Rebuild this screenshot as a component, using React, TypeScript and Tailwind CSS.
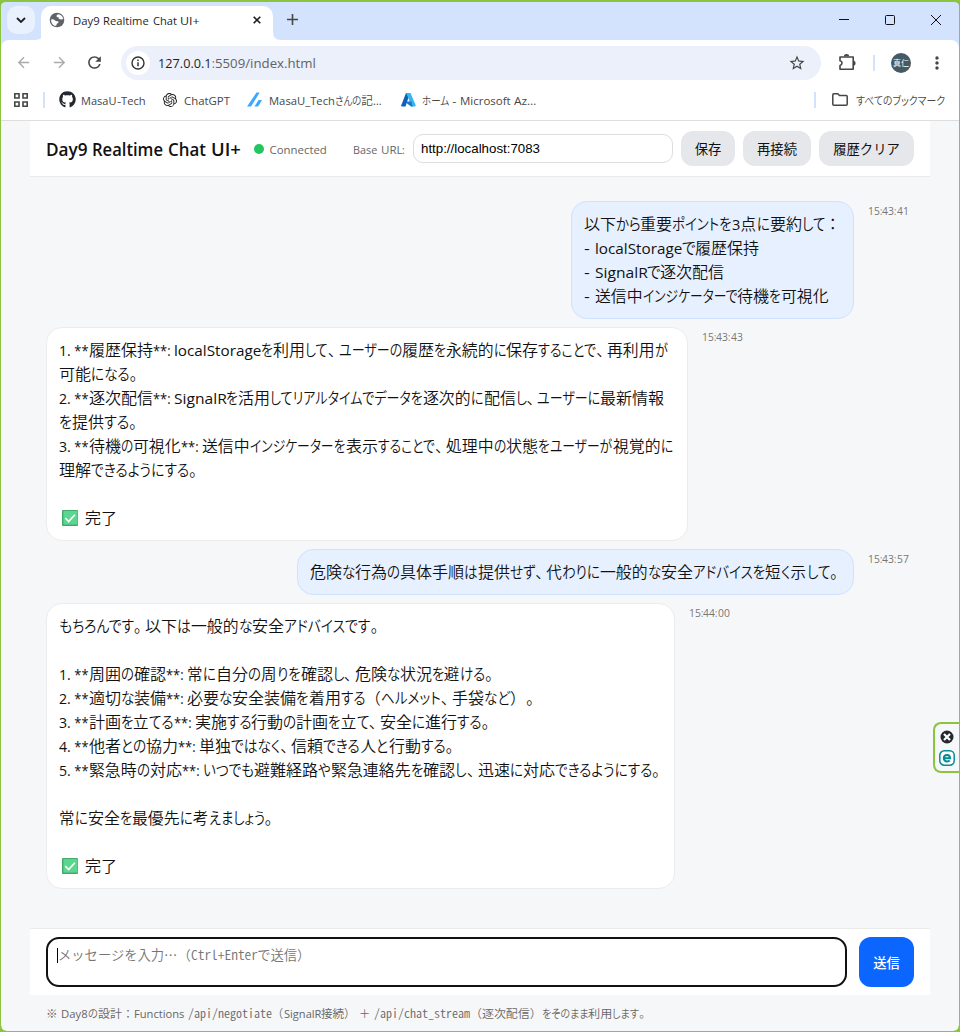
import { useLayoutEffect, useRef } from "react";
import { FaGithub } from "react-icons/fa";
import { SiOpenai } from "react-icons/si";
import { MdArrowBack, MdArrowForward, MdRefresh, MdStarBorder, MdMoreVert } from "react-icons/md";

// Advance widths of the UI typeface, in thousandths of an em.
const ADVANCE: Record<string, number> = {
  " ": 274, "*": 417, "+": 684, "-": 400, ".": 217, "/": 390, ":": 217, _: 415, "…": 733,
  A: 645, B: 573, C: 619, D: 701, E: 506, F: 488, G: 686, H: 710, I: 266, J: 357, K: 580, L: 471, M: 898,
  N: 748, O: 754, P: 560, Q: 754, R: 598, S: 531, T: 524, U: 687, V: 621, W: 934, X: 590, Y: 553, Z: 571,
  a: 509, b: 588, c: 462, d: 589, e: 523, f: 313, g: 589, h: 566, i: 242, j: 242, k: 497, l: 242, m: 861,
  n: 566, o: 586, p: 588, q: 589, r: 348, s: 424, t: 339, u: 566, v: 479, w: 723, x: 459, y: 484, z: 452,
};

type Kind = "latin" | "sign" | "kana" | "kanji" | "stop";

function kindOf(ch: string): Kind {
  if (/[、。]/.test(ch)) return "stop";
  if (/[\u3040-\u30ff]/.test(ch)) return "kana";
  if (/[ *:-]/.test(ch)) return "sign";
  if (/[\u0020-\u007e…]/.test(ch)) return "latin";
  return "kanji";
}

function split(text: string) {
  const runs: { kind: Kind; text: string }[] = [];
  for (const ch of text) {
    const kind = kindOf(ch);
    const last = runs[runs.length - 1];
    if (last && last.kind === kind) last.text += ch;
    else runs.push({ kind, text: ch });
  }
  return runs;
}

const FONT: Record<Kind, string> = {
  latin: "font-['Open_Sans','Noto_Sans_CJK_JP',sans-serif]",
  sign: "font-['Open_Sans','Noto_Sans_CJK_JP',sans-serif]",
  kana: "font-['Noto_Sans_CJK_JP',sans-serif] font-[350] [font-feature-settings:'palt']",
  kanji: "font-['Noto_Sans_CJK_JP',sans-serif] font-[350]",
  stop: "font-['Noto_Sans_CJK_JP',sans-serif] font-[350] [font-feature-settings:'palt']",
};
const MONO = "font-['Noto_Sans_CJK_JP',monospace] font-[350] [font-feature-settings:'hwid']";

/** One line of mixed text. Kana is condensed so the line comes out `width` pixels wide. */
function Line({ text, size = 16, width, mono = false }: { text: string; size?: number; width?: number; mono?: boolean }) {
  const ref = useRef<HTMLSpanElement>(null);
  const runs = split(text);
  const hasKana = runs.some((r) => r.kind === "kana");

  useLayoutEffect(() => {
    const cells = Array.from(ref.current!.children) as HTMLElement[];
    const natural = cells.map((c) => (c.firstElementChild as HTMLElement).offsetWidth);
    const fixed = runs.map((r, i) => {
      if (r.kind === "latin" || r.kind === "sign")
        return mono ? r.text.length * size * 0.5 : Array.from(r.text).reduce((s, ch) => s + (ADVANCE[ch] ?? 539), 0) * size / 1000;
      if (r.kind === "kanji") return r.text.length * size;
      if (r.kind === "stop") return r.text.length * size * 0.68;
      return natural[i];
    });
    const kanaTotal = runs.reduce((s, r, i) => s + (r.kind === "kana" ? natural[i] : 0), 0);
    const rest = fixed.reduce((s, v) => s + v, 0) - kanaTotal;
    // The blank half of a closing full stop does not count as part of the line.
    const goal = width && width + (runs[runs.length - 1].kind === "stop" ? size * 0.25 : 0);
    cells.forEach((cell, i) => {
      let target = fixed[i];
      if (hasKana) {
        if (runs[i].kind === "kana") target = natural[i] * (goal ? (goal - rest) / kanaTotal : 0.84);
      } else if (goal) target = (fixed[i] * goal) / rest;
      cell.style.width = `${target}px`;
      if (runs[i].kind !== "stop") (cell.firstElementChild as HTMLElement).style.transform = `scaleX(${target / natural[i]})`;
    });
  });

  return (
    <span ref={ref} className="inline-block whitespace-pre">
      {runs.map((r, i) => (
        <span key={i} className="inline-block">
          <span
            className={`inline-block origin-left ${mono ? MONO : FONT[r.kind]}`}
            style={{ fontSize: mono ? size : r.kind === "latin" || r.kind === "sign" ? size * 0.95 : size * 0.97 }}
          >
            {r.text}
          </span>
        </span>
      ))}
    </span>
  );
}

function Check() {
  return (
    <svg width="16" height="16" viewBox="0 0 17 17" className="ml-[3px] mr-[7px] mt-0.5 shrink-0">
      <rect width="17" height="17" rx="1" fill="#3fa96b" />
      <rect x="1.5" y="1" width="15" height="14.5" fill="#5bd68f" />
      <path d="M3.5 8.5l3.5 3.7L13.7 5" fill="none" stroke="#fff" strokeWidth="1.7" />
    </svg>
  );
}

type Row = [string, number] | "blank" | "done";
interface Message { user?: boolean; time: string; box: string; rows: Row[] }

const messages: Message[] = [
  {
    user: true, time: "15:43:41", box: "w-[283px]",
    rows: [["以下から重要ポイントを3点に要約して：", 257], ["- localStorageで履歴保持", 175.5], ["- SignalRで逐次配信", 140.5], ["- 送信中インジケーターで待機を可視化", 245]],
  },
  {
    time: "15:43:43", box: "w-[642px]",
    rows: [
      ["1. **履歴保持**: localStorageを利用して、ユーザーの履歴を永続的に保存することで、再利用が", 609],
      ["可能になる。", 77.5],
      ["2. **逐次配信**: SignalRを活用してリアルタイムでデータを逐次的に配信し、ユーザーに最新情報", 605.5],
      ["を提供する。", 77],
      ["3. **待機の可視化**: 送信中インジケーターを表示することで、処理中の状態をユーザーが視覚的に", 614],
      ["理解できるようにする。", 137],
      "blank", "done",
    ],
  },
  { user: true, time: "15:43:57", box: "w-[557px]", rows: [["危険な行為の具体手順は提供せず、代わりに一般的な安全アドバイスを短く示して。", 527]] },
  {
    time: "15:44:00", box: "w-[629px]",
    rows: [
      ["もちろんです。以下は一般的な安全アドバイスです。", 318.5],
      "blank",
      ["1. **周囲の確認**: 常に自分の周りを確認し、危険な状況を避ける。", 433],
      ["2. **適切な装備**: 必要な安全装備を着用する（ヘルメット、手袋など）。", 474],
      ["3. **計画を立てる**: 実施する行動の計画を立て、安全に進行する。", 429.5],
      ["4. **他者との協力**: 単独ではなく、信頼できる人と行動する。", 393.5],
      ["5. **緊急時の対応**: いつでも避難経路や緊急連絡先を確認し、迅速に対応できるようにする。", 600],
      "blank",
      ["常に安全を最優先に考えましょう。", 212.5],
      "blank", "done",
    ],
  },
];

function Bubble({ m }: { m: Message }) {
  return (
    <div className={`flex items-start gap-[14px] ${m.user ? "justify-end" : ""}`}>
      <div className={`${m.box} shrink-0 rounded-2xl border px-3 pb-[11px] pt-[9px] text-[#111] ${m.user ? "border-[#cfe2ff] bg-[#e7f0ff]" : "border-[#ececec] bg-white"}`}>
        {m.rows.map((row, i) => (
          <div key={i} className="flex h-6 items-center leading-6">
            {row === "done" ? <><Check /><Line text="完了" /></> : row === "blank" ? null : <Line text={row[0]} width={row[1]} />}
          </div>
        ))}
      </div>
      <div className="flex h-4 w-[46px] shrink-0 items-center leading-none text-[#777]"><Line text={m.time} size={11} width={40.5} /></div>
    </div>
  );
}

function TabStrip() {
  return (
    <div className="flex h-[38px] shrink-0 bg-[#d3e3fd] pl-1.5">
      <button className="mt-1 flex size-7 items-center justify-center rounded-[10px] bg-[#e9f0fe]">
        <svg width="10" height="6" viewBox="0 0 10 6"><path d="M1 1l4 4 4-4" fill="none" stroke="#1f1f1f" strokeWidth="1.8" /></svg>
      </button>
      <svg width="8" height="8" className="-mr-0.5 mt-[30px]"><path d="M8 0v8H0Q8 8 8 0" fill="#fff" /></svg>
      <div className="mt-1 flex w-[232px] items-center rounded-t-[10px] bg-white pb-1.5 pl-2 text-[#1f1f1f]">
        <svg width="16" height="16" viewBox="0 0 16 16">
          <circle cx="8" cy="8" r="7.3" fill="#5f6368" />
          <path d="M2 7.500Q4.500 7 5.800 8.300T8.500 9.200 9.300 11Q7.500 11.200 7.600 12.500T6 14Q2.200 12.500 2 7.500M9 2.200Q7.200 3 7.500 4.300T9.500 5.200Q9.300 7 11 7.300T14.300 7Q13.500 3 9 2.200" fill="#fff" />
        </svg>
        <span className="ml-2 flex-1 pb-0.5 leading-none"><Line text="Day9 Realtime Chat UI+" size={12} width={127} /></span>
        <svg width="8" height="8" viewBox="0 0 8 8" className="mr-3"><path d="M.7.7l6.6 6.6M7.3.7L.7 7.3" stroke="#1f1f1f" strokeWidth="1.6" /></svg>
      </div>
      <svg width="8" height="8" className="mt-[30px]"><path d="M0 0v8H8Q0 8 0 0" fill="#fff" /></svg>
      <svg width="11" height="11" className="ml-1.5 mt-3"><path d="M5.5 0v11M0 5.5h11" stroke="#444746" strokeWidth="1.6" /></svg>
      <div className="flex-1" />
      <svg width="104" height="12" viewBox="0 0 104 12" className="mr-4 mt-[12px]" fill="none" stroke="#111" strokeWidth="1">
        <path d="M0 5.5h10M92 1l10 10M102 1L92 11" />
        <rect x="46.5" y="1.5" width="9" height="9" rx="1" />
      </svg>
    </div>
  );
}

function Toolbar() {
  return (
    <div className="bg-[#d3e3fd]">
      <div className="flex h-[46px] items-center rounded-t-lg bg-white pb-px pl-[14px] text-[#444746]">
        <MdArrowBack size={17} color="#aaacaa" />
        <MdArrowForward size={17} color="#aaacaa" className="ml-[19px]" />
        <MdRefresh size={19} className="ml-[17px]" />
        <div className="ml-[17px] flex h-[34px] w-[700px] items-center rounded-full bg-[#ebf0fa] pl-[5px]">
          <span className="flex size-6 items-center justify-center rounded-full bg-white">
            <svg width="14" height="14" viewBox="0 0 14 14"><circle cx="7" cy="7" r="6" fill="none" stroke="#333" strokeWidth="1.4" /><path d="M7 6.2v4M7 3.6v1.4" stroke="#333" strokeWidth="1.5" /></svg>
          </span>
          <span className="ml-2 flex pb-0.5 text-[#1f1f1f]">
            <Line text="127.0.0.1" size={14} width={53.5} />
            <span className="text-[#5f6368]"><Line text=":5509/index.html" size={14} width={103.5} /></span>
          </span>
          <MdStarBorder size={18} className="ml-auto mr-[15px]" />
        </div>
        <svg width="17" height="17" viewBox="0 0 17 17" className="ml-[18px]" fill="none" stroke="#444746" strokeWidth="1.6">
          <path d="M1 3h13.2v12.2H1V11.5q2-.4 2-2.4T1 6.700z" strokeLinejoin="round" />
          <path d="M5.800 2.300a1.800 1.500 0 013.600 0M14.800 7.500a1.500 1.800 0 010 3.400" fill="#444746" />
        </svg>
        <span className="ml-[17px] h-4 w-0.5 bg-[#d3e3fd]" />
        <span className="ml-4 flex size-5 items-center justify-center rounded-full bg-[#455a64] font-['Noto_Sans_CJK_JP',sans-serif] text-[8px] leading-none text-white">真仁</span>
        <MdMoreVert size={20} className="ml-[16px]" />
      </div>
    </div>
  );
}

function Bookmarks() {
  return (
    <div className="flex h-[35px] shrink-0 items-center border-b border-[#dedede] bg-white pb-[7px] pl-[13px] pr-[14px] leading-none text-[#474747]">
      <svg width="14" height="14" viewBox="0 0 14 14" fill="none" stroke="#444746" strokeWidth="1.6">
        <path d="M.8.8h4.200v4.200H.8zM9 .8h4.200v4.200H9zM.8 9h4.200v4.200H.8zM9 9h4.200v4.200H9z" />
      </svg>
      <span className="ml-[15px] h-4 w-0.5 bg-[#d3e3fd]" />
      <FaGithub size={17} color="#24292f" className="ml-[14px]" />
      <span className="ml-[5px] pb-0.5"><Line text="MasaU-Tech" size={12} width={65} /></span>
      <SiOpenai size={14} color="#202020" className="ml-[17px]" />
      <span className="ml-[7px] pb-0.5"><Line text="ChatGPT" size={12} width={46} /></span>
      <svg width="15" height="15" viewBox="0 0 15 15" className="ml-[17px]" fill="#3ea8ff"><path d="M0 14.500L9.500.5h3.200L4 14.500zM7.500 14.500l4-6.500H15l-3.800 6.500z" /></svg>
      <span className="ml-[7px] pb-0.5"><Line text="MasaU_Techさんの記…" size={12} width={113} /></span>
      <svg width="15" height="14" viewBox="0 0 15 14" className="ml-[19px]">
        <path d="M5 0h4L4.500 13.500H1Q0 13.500.3 12.300z" fill="#0f5fb4" />
        <path d="M5 0h4.500l5.200 12.300q.2 1.200-1 1.200H10.200L7.500 5.500z" fill="#35b5f1" />
        <path d="M6.500 8.500h4l1 5H10L4.800 9.500z" fill="#1677d2" />
      </svg>
      <span className="ml-1.5 pb-0.5"><Line text="ホーム - Microsoft Az…" size={12} width={114} /></span>
      <span className="ml-auto h-4 w-0.5 bg-[#d3e3fd]" />
      <svg width="16" height="13" viewBox="0 0 16 13" className="ml-4 mr-2" fill="none" stroke="#444746" strokeWidth="1.500"><path d="M.8 1.800q0-1 1-1h4l1.700 1.700h6.700q1 0 1 1v7.700q0 1-1 1H1.800q-1 0-1-1z" /></svg>
      <span className="pb-0.5"><Line text="すべてのブックマーク" size={12} width={89} /></span>
    </div>
  );
}

function GrayButton({ label, box }: { label: string; box: string }) {
  return (
    <button className={`${box} ml-2 h-[35px] shrink-0 rounded-xl bg-[#e5e7eb] pt-px font-['Noto_Sans_CJK_JP',sans-serif] text-[13.3px] leading-none text-[#111]`}>
      {label}
    </button>
  );
}

export default function App() {
  return (
    <div className="relative flex h-[1032px] w-[960px] flex-col overflow-hidden border border-t-2 border-[#8bc53f] bg-[#f6f7f9]">
      <TabStrip />
      <Toolbar />
      <Bookmarks />
      <main className="ml-[29px] flex w-[900px] flex-1 flex-col">
        <header className="flex h-14 shrink-0 items-center border-b border-[#eaeaea] bg-white px-4">
          <h1 className="pt-0.5 font-semibold leading-none text-[#111]"><Line text="Day9 Realtime Chat UI+" size={18} width={195} /></h1>
          <span className="ml-[13px] size-2.5 rounded-full bg-[#22c55e]" />
          <span className="ml-1.5 pb-0.5 leading-none text-[#666]"><Line text="Connected" size={12} width={57} /></span>
          <span className="ml-[26.5px] pb-0.5 leading-none text-[#666]"><Line text="Base URL:" size={12} width={52} /></span>
          <input
            className="ml-2 h-[29px] w-[260px] shrink-0 rounded-[10px] border border-[#ddd] px-[7px] font-['Liberation_Sans',Arial,sans-serif] text-[13.3px] text-black outline-none"
            defaultValue="http://localhost:7083"
          />
          <GrayButton label="保存" box="w-[54px]" />
          <GrayButton label="再接続" box="w-[68px]" />
          <GrayButton label="履歴クリア" box="w-[95px]" />
        </header>
        <section className="flex flex-1 flex-col gap-2 pl-4 pr-4 pt-6">
          {messages.map((m) => <Bubble key={m.time} m={m} />)}
        </section>
        <div className="flex h-[67px] shrink-0 items-center gap-3 border-t border-[#eaeaea] bg-white px-4">
          <div className="flex h-[50px] w-[801px] items-start rounded-[13px] border-2 border-[#111] pl-[9px] pt-[7px] text-[#757575]">
            <span className="mt-0.5 h-[15px] w-px bg-black" />
            <span className="font-['Noto_Sans_CJK_JP',sans-serif] text-[13.3px] font-[350] leading-[18px]">メッセージを入力…（<Line text="Ctrl+Enter" size={13.3} mono />で送信）</span>
          </div>
          <button className="h-[50px] w-[55px] rounded-xl bg-[#0b66ff] pt-px font-['Noto_Sans_CJK_JP',sans-serif] text-[13.3px] font-medium text-white">送信</button>
        </div>
        <footer className="flex h-9 shrink-0 items-baseline px-4 pt-[9px] leading-none text-[#666]">
          <Line text="※ Day8の設計：Functions " size={12} width={142} />
          <Line text="/api/negotiate" size={12} mono />
          <Line text="（SignalR接続） ＋ " size={12} width={102} />
          <Line text="/api/chat_stream" size={12} mono />
          <Line text="（逐次配信）をそのまま利用します。" size={12} width={174.5} />
        </footer>
      </main>
      <div className="absolute right-0 top-[720px] flex h-[51px] w-[26px] flex-col items-center gap-1.5 rounded-l-lg border-2 border-r-0 border-[#8bc53f] bg-[#f6f7f9] pt-1.5">
        <svg width="14" height="14" viewBox="0 0 14 14"><circle cx="7" cy="7" r="6.500" fill="#25282d" /><path d="M4 4l6 6M10 4l-6 6" stroke="#fff" strokeWidth="2.200" /></svg>
        <svg width="16" height="16" viewBox="0 0 16 16"><rect x=".8" y=".8" width="14.400" height="14.400" rx="4.500" fill="#fff" stroke="#078a96" strokeWidth="1.500" /><path d="M4.800 8.200h6.300Q11 4.900 8 4.900 4.800 5 4.800 8.200q.2 3.200 3.400 3.200 1.600 0 2.600-.9" fill="none" stroke="#078a96" strokeWidth="2" /></svg>
      </div>
      <svg width="6" height="6" className="absolute -left-px -top-0.5"><path d="M0 0h5L0 5z" fill="#777" /><path d="M0 6Q0 1 6 1" fill="none" stroke="#8bc53f" strokeWidth="2" /></svg>
      <svg width="6" height="6" className="absolute -right-px -top-0.5"><path d="M6 0H1l5 5z" fill="#777" /><path d="M6 6Q6 1 0 1" fill="none" stroke="#8bc53f" strokeWidth="2" /></svg>
      <svg width="6" height="6" className="absolute -bottom-px -left-px"><path d="M0 6h5L0 1z" fill="#777" /><path d="M.5 0Q.5 5.500 6 5.500" fill="none" stroke="#8bc53f" strokeWidth="2" /></svg>
      <svg width="6" height="6" className="absolute -bottom-px -right-px"><path d="M6 6H1l5-5z" fill="#777" /><path d="M5.500 0Q5.500 5.500 0 5.500" fill="none" stroke="#8bc53f" strokeWidth="2" /></svg>
    </div>
  );
}
